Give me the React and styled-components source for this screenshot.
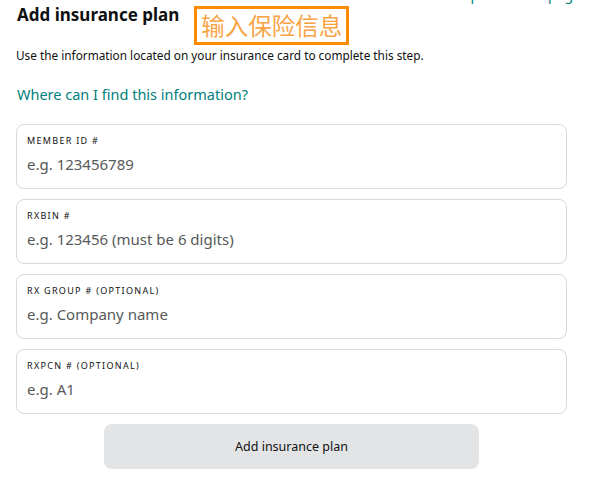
import React from 'react';
import styled, { createGlobalStyle } from 'styled-components';

const GlobalStyle = createGlobalStyle`
  html, body {
    margin: 0;
    padding: 0;
    background: #ffffff;
  }
  body {
    font-family: 'Noto Sans', 'Liberation Sans', sans-serif;
    color: #0f1111;
  }
`;

const fields = [
  { label: 'MEMBER ID #', placeholder: 'e.g. 123456789' },
  { label: 'RXBIN #', placeholder: 'e.g. 123456 (must be 6 digits)' },
  { label: 'RX GROUP # (OPTIONAL)', placeholder: 'e.g. Company name' },
  { label: 'RXPCN # (OPTIONAL)', placeholder: 'e.g. A1' },
];

function App() {
  return (
    <Page>
      <GlobalStyle />
      <TopLink>
        <TopLinkText>Return to pharmacist page</TopLinkText>
      </TopLink>
      <Header>
        <Title>Add insurance plan</Title>
        <Badge>输入保险信息</Badge>
      </Header>
      <Intro>Use the information located on your insurance card to complete this step.</Intro>
      <HelpLink href="#">Where can I find this information?</HelpLink>
      <Form>
        {fields.map((field) => (
          <Field key={field.label}>
            <Label>{field.label}</Label>
            <Input placeholder={field.placeholder} />
          </Field>
        ))}
      </Form>
      <ButtonRow>
        <SubmitButton type="button">Add insurance plan</SubmitButton>
      </ButtonRow>
    </Page>
  );
}

export default App;

const Page = styled('div')`
  width: 597px;
  height: 486px;
  overflow: hidden;
  padding: 0 30px 0 16px;
  box-sizing: border-box;
`;

const TopLink = styled('div')`
  height: 4px;
  margin-right: -14px;
  overflow: hidden;
  text-align: right;
`;

const TopLinkText = styled('span')`
  display: block;
  margin-top: -15px;
  font-size: 14px;
  line-height: 20px;
  color: #00807e;
`;

const Header = styled('div')`
  display: flex;
  align-items: flex-start;
`;

const Title = styled('h1')`
  margin: 0;
  padding-left: 1px;
  font-size: 17px;
  font-weight: 700;
  line-height: 21px;
  color: #0f1111;
`;

const Badge = styled('div')`
  margin-left: 15px;
  margin-top: 2px;
  padding: 0 4px;
  border: 3px solid #ff8c00;
  font-family: 'Noto Sans CJK SC', sans-serif;
  font-size: 23.5px;
  line-height: 33px;
  color: #f8a445;
`;

const Intro = styled('p')`
  margin: 1px 0 0;
  font-size: 11.8px;
  line-height: 18px;
  color: #0f1111;
`;

const HelpLink = styled('a')`
  display: block;
  margin: 20px 0 0 1px;
  font-size: 14.5px;
  line-height: 20px;
  color: #00807e;
  text-decoration: none;
`;

const Form = styled('div')`
  display: flex;
  flex-direction: column;
  gap: 10px;
  margin-top: 20px;
`;

const Field = styled('label')`
  display: flex;
  flex-direction: column;
  height: 65px;
  box-sizing: border-box;
  padding: 10px 10px 0;
  border: 1px solid #d5dbdb;
  border-radius: 8px;
`;

const Label = styled('span')`
  font-size: 9px;
  line-height: 12px;
  letter-spacing: 1.3px;
  color: #0f1111;
`;

const Input = styled('input')`
  margin-top: 6px;
  padding: 0;
  border: none;
  outline: none;
  font-family: 'Noto Sans', 'Liberation Sans', sans-serif;
  font-size: 15px;
  line-height: 22px;
  color: #0f1111;

  &::placeholder {
    color: #565959;
  }
`;

const ButtonRow = styled('div')`
  display: flex;
  justify-content: center;
  margin-top: 10px;
`;

const SubmitButton = styled('button')`
  width: 375px;
  height: 45px;
  border: none;
  border-radius: 8px;
  background: #e3e4e6;
  font-family: 'Noto Sans', 'Liberation Sans', sans-serif;
  font-size: 12.5px;
  color: #0f1111;
`;
